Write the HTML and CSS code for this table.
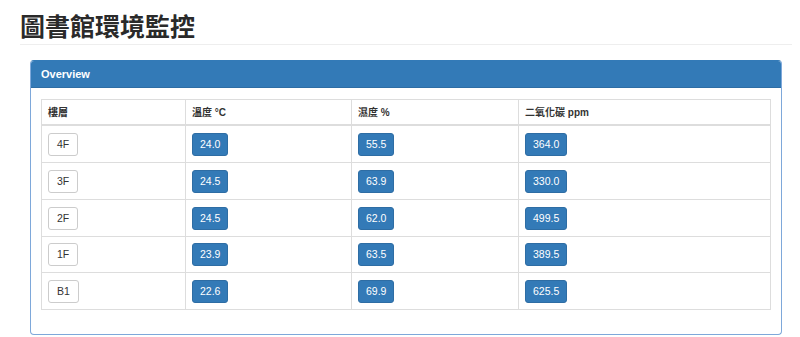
FILE: index.html
```html
<!DOCTYPE html>
<html lang="zh-Hant">
<head>
<meta charset="utf-8">
<title>圖書館環境監控</title>
<link rel="stylesheet" href="styles.css">
</head>
<body>
<div class="page">
  <header class="page-header">
    <h1 class="title">圖書館環境監控</h1>
  </header>
  <section class="panel">
    <div class="panel-heading">Overview</div>
    <div class="panel-body">
      <table class="readings">
        <thead>
          <tr>
            <th class="col-floor">樓層</th>
            <th class="col-temp">溫度 °C</th>
            <th class="col-hum">濕度 %</th>
            <th class="col-co2">二氧化碳 ppm</th>
          </tr>
        </thead>
        <tbody>
          <tr>
            <td><span class="btn btn-floor">4F</span></td>
            <td><span class="btn btn-value">24.0</span></td>
            <td><span class="btn btn-value">55.5</span></td>
            <td><span class="btn btn-value">364.0</span></td>
          </tr>
          <tr>
            <td><span class="btn btn-floor">3F</span></td>
            <td><span class="btn btn-value">24.5</span></td>
            <td><span class="btn btn-value">63.9</span></td>
            <td><span class="btn btn-value">330.0</span></td>
          </tr>
          <tr>
            <td><span class="btn btn-floor">2F</span></td>
            <td><span class="btn btn-value">24.5</span></td>
            <td><span class="btn btn-value">62.0</span></td>
            <td><span class="btn btn-value">499.5</span></td>
          </tr>
          <tr>
            <td><span class="btn btn-floor">1F</span></td>
            <td><span class="btn btn-value">23.9</span></td>
            <td><span class="btn btn-value">63.5</span></td>
            <td><span class="btn btn-value">389.5</span></td>
          </tr>
          <tr>
            <td><span class="btn btn-floor">B1</span></td>
            <td><span class="btn btn-value">22.6</span></td>
            <td><span class="btn btn-value">69.9</span></td>
            <td><span class="btn btn-value">625.5</span></td>
          </tr>
        </tbody>
      </table>
    </div>
  </section>
</div>
</body>
</html>
```

FILE: styles.css
```css
html, body {
  margin: 0;
  padding: 0;
  background: #fff;
}

body {
  font-family: "Liberation Sans", "Noto Sans CJK TC", sans-serif;
  color: #333;
}

.page {
  padding: 0 8px 0 20px;
}

/* Page title with its thin rule underneath */
.page-header {
  padding: 11px 0 5px;
  border-bottom: 1px solid #eee;
}

.title {
  margin: 0;
  font-family: "Noto Sans CJK TC", sans-serif;
  font-size: 25px;
  line-height: 28px;
  font-weight: 700;
  color: #2a2a2a;
}

/* Primary panel */
.panel {
  margin: 15px 10px 0;
  border: 1px solid #7ea8da;
  border-top-color: #337ab7;
  border-radius: 4px;
  overflow: hidden;
}

.panel-heading {
  height: 26px;
  line-height: 26px;
  padding: 0 10px;
  background: #337ab7;
  border-bottom: 1px solid #2e6da4;
  color: #fff;
  font-size: 11px;
  font-weight: 700;
}

.panel-body {
  padding: 11px 10px 10px;
}

/* Readings table */
.readings {
  width: 100%;
  table-layout: fixed;
  border-collapse: collapse;
  border: 1px solid #ddd;
  margin-bottom: 14px;
}

.readings th,
.readings td {
  border: 1px solid #ddd;
  text-align: left;
  vertical-align: middle;
  font-size: 10px;
}

.readings th {
  padding: 6px 6px 5px;
  line-height: 13px;
  font-weight: 700;
  border-bottom-width: 2px;
}

.readings td {
  padding: 6px 6px;
  line-height: 23px;
}

.col-floor { width: 131px; }
.col-temp { width: 153px; }
.col-hum { width: 154px; }

/* Button-like labels */
.btn {
  display: inline-block;
  vertical-align: middle;
  font-size: 10.5px;
  line-height: 13px;
  padding: 4px 7px;
  border: 1px solid transparent;
  border-radius: 3px;
}

.btn-floor {
  padding: 4px 8px;
  background: #fff;
  border-color: #ccc;
  color: #333;
}

.btn-value {
  background: #337ab7;
  border-color: #2e6da4;
  color: #fff;
}
```
